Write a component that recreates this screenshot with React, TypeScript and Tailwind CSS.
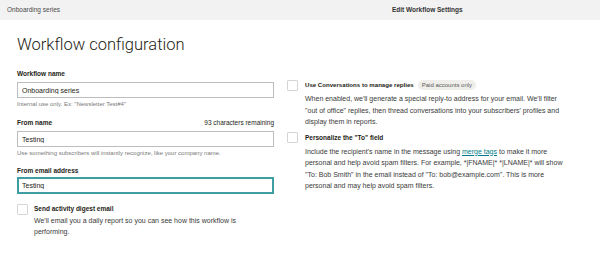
import { useState, ChangeEvent } from 'react'

function Check({ className = '' }: { className?: string }) {
  return (
    <span
      className={`block h-[11px] w-[11px] shrink-0 rounded-[1px] border border-[#d5d5d5] bg-white ${className}`}
    />
  )
}

export default function App() {
  const [email, setEmail] = useState<string>('Testing')

  const handleChange = (event: ChangeEvent<HTMLInputElement>) => {
    setEmail(event.target.value)
  }

  return (
    <div className="h-[256px] w-[600px] overflow-hidden bg-white font-['Liberation_Sans',sans-serif] text-[#241c15]">
      <header className="flex h-[20px] items-center bg-[#f2f2f2] px-[7px] text-[6.5px]">
        <span className="w-[290px] text-[#4a4a4a]">Onboarding series</span>
        <span className="ml-[95px] font-bold text-[#333]">Edit Workflow Settings</span>
      </header>

      <main className="ml-[15px] border-b border-[#ececec] pl-[2px]">
        <h1 className="mt-[15px] font-['Roboto',sans-serif] text-[16.5px] leading-[20px] font-light">
          Workflow configuration
        </h1>

        <div className="mt-[14px] flex gap-[13px]">
          <div className="w-[257px]">
            <label className="block text-[6.5px] leading-[10px] font-bold">Workflow name</label>
            <input
              className="mt-[3px] block h-[16px] w-full border border-[#bdbdbd] px-[4px] text-[7px] outline-none"
              defaultValue="Onboarding series"
            />
            <p className="mt-[2px] text-[6px] leading-[9px] text-[#7a7a7a]">
              Internal use only. Ex: "Newsletter Test#4"
            </p>

            <div className="mt-[9px] flex justify-between text-[6.5px] leading-[10px]">
              <label className="font-bold">From name</label>
              <span className="text-[#241c15]">93 characters remaining</span>
            </div>
            <input
              className="mt-[3px] block h-[16px] w-full border border-[#bdbdbd] px-[4px] text-[7px] outline-none"
              defaultValue="Testing"
            />
            <p className="mt-[2px] text-[6px] leading-[9px] text-[#7a7a7a]">
              Use something subscribers will instantly recognize, like your company name.
            </p>

            <label className="mt-[8px] block text-[6.5px] leading-[10px] font-bold">
              From email address
            </label>
            <input
              className="mt-[1px] block h-[17px] w-full border-2 border-[#3e9ea1] px-[3px] text-[7px] outline-none"
              value={email}
              onChange={handleChange}
            />

            <div className="mt-[9px] flex gap-[6px]">
              <Check className="mt-[1px]" />
              <div>
                <p className="mt-[1px] text-[6.5px] leading-[10px] font-bold">
                  Send activity digest email
                </p>
                <p className="mt-[2px] w-[215px] text-[7px] leading-[10.5px] text-[#3a3a3a]">
                  We'll email you a daily report so you can see how this workflow is performing.
                </p>
              </div>
            </div>
            <div className="h-[20px]" />
          </div>

          <div className="w-[290px] pt-[11px]">
            <div className="flex gap-[7px]">
              <Check className="bg-[#f5f5f5]" />
              <div>
                <div className="flex items-center gap-[4px]">
                  <span className="text-[6.1px] font-bold">Use Conversations to manage replies</span>
                  <span className="rounded-full bg-[#efeeea] px-[4px] py-[1px] text-[6px] leading-[8px] text-[#5a5a5a]">
                    Paid accounts only
                  </span>
                </div>
                <p className="mt-[3px] w-[265px] text-[7px] leading-[11.5px] text-[#3a3a3a]">
                  When enabled, we'll generate a special reply-to address for your email. We'll
                  filter "out of office" replies, then thread conversations into your subscribers'
                  profiles and display them in reports.
                </p>
              </div>
            </div>

            <div className="mt-[5px] flex gap-[7px]">
              <Check className="mt-[-1px]" />
              <div>
                <p className="text-[6.5px] leading-[10px] font-bold">Personalize the "To" field</p>
                <p className="mt-[3px] w-[265px] text-[7px] leading-[11.5px] text-[#3a3a3a]">
                  Include the recipient's name in the message using{' '}
                  <a href="#" className="text-[#007c89] underline">
                    merge tags
                  </a>{' '}
                  to make it more personal and help avoid spam filters. For example, *|FNAME|*
                  *|LNAME|* will show "To: Bob Smith" in the email instead of "To:
                  bob@example.com". This is more personal and may help avoid spam filters.
                </p>
              </div>
            </div>
          </div>
        </div>
      </main>
    </div>
  )
}
